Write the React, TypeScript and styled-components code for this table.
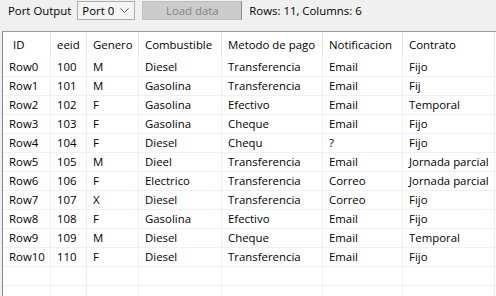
import * as React from "react";
import styled, { createGlobalStyle } from "styled-components";

const GlobalStyle = createGlobalStyle`
  html, body {
    margin: 0;
    padding: 0;
    background: #f0f0f0;
    overflow: hidden;
  }
  body {
    font-family: "Open Sans", "Noto Sans", sans-serif;
    font-size: 11.4px;
    color: #000;
  }
`;

const columns = ["ID", "eeid", "Genero", "Combustible", "Metodo de pago", "Notificacion", "Contrato"];
const colWidths = [48, 36, 52, 83, 101, 80, 92];

const rows: string[][] = [
  ["Row0", "100", "M", "Diesel", "Transferencia", "Email", "Fijo"],
  ["Row1", "101", "M", "Gasolina", "Transferencia", "Email", "Fij"],
  ["Row2", "102", "F", "Gasolina", "Efectivo", "Email", "Temporal"],
  ["Row3", "103", "F", "Gasolina", "Cheque", "Email", "Fijo"],
  ["Row4", "104", "F", "Diesel", "Chequ", "?", "Fijo"],
  ["Row5", "105", "M", "Dieel", "Transferencia", "Email", "Jornada parcial"],
  ["Row6", "106", "F", "Electrico", "Transferencia", "Correo", "Jornada parcial"],
  ["Row7", "107", "X", "Diesel", "Transferencia", "Correo", "Fijo"],
  ["Row8", "108", "F", "Gasolina", "Efectivo", "Email", "Fijo"],
  ["Row9", "109", "M", "Diesel", "Cheque", "Email", "Temporal"],
  ["Row10", "110", "F", "Diesel", "Transferencia", "Email", "Fijo"],
  ["", "", "", "", "", "", ""],
  ["", "", "", "", "", "", ""],
];

const Window = styled.div`
  width: 496px;
  height: 296px;
  display: flex;
  flex-direction: column;
  background: #f0f0f0;
`;

const Toolbar = styled.div`
  height: 31px;
  display: flex;
  align-items: flex-start;
  padding: 1px 0 0 8px;
  box-sizing: border-box;
`;

const Label = styled.span`
  line-height: 19px;
  margin-right: 6px;
`;

const Combo = styled.div`
  width: 58px;
  height: 19px;
  box-sizing: border-box;
  border: 1px solid #adadad;
  background: #f4f4f4;
  display: flex;
  align-items: center;
  justify-content: space-between;
  padding: 0 5px 0 4px;
  margin-right: 7px;
`;

const LoadButton = styled.button`
  width: 100px;
  height: 19px;
  box-sizing: border-box;
  border: 1px solid #bfbfbf;
  border-right-color: #8a8a8a;
  background: #cccccc;
  color: #838383;
  font: inherit;
  padding: 0;
  margin-right: 7px;
`;

const Status = styled.span`
  line-height: 19px;
`;

const Table = styled.div`
  flex: 1;
  margin-left: 2px;
  border-top: 1px solid #9a9a9a;
  border-left: 1px solid #828790;
  background: #fff;
  overflow: hidden;
`;

const Row = styled.div<{ $header?: boolean }>`
  display: flex;
  height: ${(p) => (p.$header ? "25px" : "18px")};
  border-bottom: 1px solid ${(p) => (p.$header ? "#fff" : "#edf0f5")};
`;

const Cell = styled.div<{ $header?: boolean; $first?: boolean }>`
  box-sizing: border-box;
  flex: none;
  border-right: 1px solid ${(p) => (p.$header ? "#e5e5e5" : "#edf0f5")};
  padding-left: ${(p) => (p.$header && p.$first ? "10px" : "6px")};
  line-height: ${(p) => (p.$header ? "26px" : "18px")};
  white-space: nowrap;
  overflow: hidden;
`;

const Chevron = () => (
  <svg width="9" height="5" viewBox="0 0 9 5">
    <path d="M0.5 0.5 L4.5 4.5 L8.5 0.5" fill="none" stroke="#555" strokeWidth="1" />
  </svg>
);

export default function App() {
  return (
    <Window>
      <GlobalStyle />
      <Toolbar>
        <Label>Port Output</Label>
        <Combo>
          <span>Port 0</span>
          <Chevron />
        </Combo>
        <LoadButton disabled>Load data</LoadButton>
        <Status>Rows: 11, Columns: 6</Status>
      </Toolbar>
      <Table>
        <Row $header>
          {columns.map((c, i) => (
            <Cell key={c} $header $first={i === 0} style={{ width: colWidths[i] }}>
              {c}
            </Cell>
          ))}
        </Row>
        {rows.map((r, ri) => (
          <Row key={ri}>
            {r.map((v, i) => (
              <Cell key={i} style={{ width: colWidths[i] }}>
                {v}
              </Cell>
            ))}
          </Row>
        ))}
      </Table>
    </Window>
  );
}
